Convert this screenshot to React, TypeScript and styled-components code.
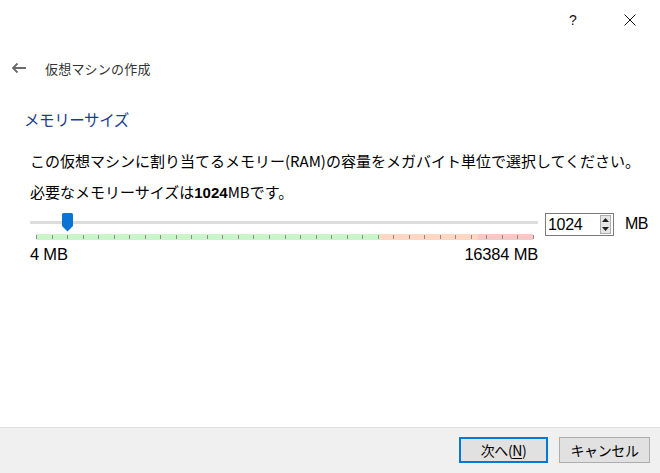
import React from "react";
import styled, { createGlobalStyle } from "styled-components";

const GlobalStyle = createGlobalStyle`
  html, body {
    margin: 0;
    padding: 0;
    background: #fff;
  }
  body {
    font-family: "Noto Sans CJK JP", "Liberation Sans", sans-serif;
    color: #000;
  }
`;

const TOTAL = 16384;
const VALUE = 1024;
const TRACK_W = 508;
const STRIP_LEFT = 6;
const STRIP_W = 497;

const App = () => {
  const ticks = Array.from({ length: 33 }, (_, i) => i * (STRIP_W / 32));
  const handleX = STRIP_LEFT + (VALUE / TOTAL) * STRIP_W;

  return (
    <Window>
      <GlobalStyle />
      <TitleBar>
        <TitleButton>?</TitleButton>
        <TitleButton>
          <svg width="12" height="12" viewBox="0 0 12 12">
            <path d="M0.5 0.5 L11.5 11.5 M11.5 0.5 L0.5 11.5" stroke="#111" strokeWidth="1" fill="none" />
          </svg>
        </TitleButton>
      </TitleBar>

      <Header>
        <BackArrow>
          <svg width="15" height="12" viewBox="0 0 15 12">
            <path d="M2 6 H15 M6.5 1.5 L2 6 L6.5 10.5" stroke="#6b6b6b" strokeWidth="1.8" fill="none" />
          </svg>
        </BackArrow>
        <HeaderTitle>仮想マシンの作成</HeaderTitle>
      </Header>

      <SectionTitle>メモリーサイズ</SectionTitle>

      <Body>
        <Line>この仮想マシンに割り当てるメモリー(RAM)の容量をメガバイト単位で選択してください。</Line>
        <Line>
          必要なメモリーサイズは<Bold>1024</Bold>MBです。
        </Line>
      </Body>

      <SliderRow>
        <Track>
          <Groove />
          <Strip>
            <Zone $color="#c9f6c9" $width={344} />
            <Zone $color="#ffd7c2" $width={98} />
            <Zone $color="#ffc6c6" $width={55} />
            {ticks.map((x, i) => (
              <Tick key={i} style={{ left: x }} />
            ))}
          </Strip>
          <Handle style={{ left: handleX - 5.5 }}>
            <svg width="11" height="19" viewBox="0 0 11 19">
              <path d="M0 1.5 Q0 0 1.5 0 H9.5 Q11 0 11 1.5 V13 L5.5 18.5 L0 13 Z" fill="#0b73d1" />
            </svg>
          </Handle>
        </Track>
        <SpinBox>
          <SpinValue>1024</SpinValue>
          <SpinButtons>
            <SpinArrow>
              <svg width="7" height="4" viewBox="0 0 7 4">
                <path d="M0 4 L3.5 0 L7 4 Z" fill="#222" />
              </svg>
            </SpinArrow>
            <SpinArrow>
              <svg width="7" height="4" viewBox="0 0 7 4">
                <path d="M0 0 L3.5 4 L7 0 Z" fill="#222" />
              </svg>
            </SpinArrow>
          </SpinButtons>
        </SpinBox>
        <Unit>MB</Unit>
      </SliderRow>

      <Labels>
        <span>4 MB</span>
        <span>16384 MB</span>
      </Labels>

      <Footer>
        <Button $primary>
          次へ(<u>N</u>)
        </Button>
        <Button>キャンセル</Button>
      </Footer>
    </Window>
  );
};

export default App;

const Window = styled.div`
  width: 660px;
  height: 473px;
  display: flex;
  flex-direction: column;
  overflow: hidden;
`;

const TitleBar = styled.div`
  height: 40px;
  display: flex;
  justify-content: flex-end;
  gap: 11px;
  padding-right: 7px;
`;

const TitleButton = styled.div`
  width: 46px;
  height: 40px;
  display: flex;
  align-items: center;
  justify-content: center;
  font-family: "Liberation Sans", sans-serif;
  font-size: 14px;
  color: #111;
`;

const Header = styled.div`
  height: 24px;
  margin-top: 16px;
  display: flex;
  align-items: center;
  padding-left: 11px;
`;

const BackArrow = styled.div`
  width: 34px;
  display: flex;
  align-items: center;
`;

const HeaderTitle = styled.div`
  font-size: 13px;
  color: #333;
  letter-spacing: 0.2px;
`;

const SectionTitle = styled.div`
  margin-top: 27px;
  height: 24px;
  line-height: 24px;
  padding-left: 24px;
  font-size: 15.5px;
  color: #1a3d8f;
  letter-spacing: -0.4px;
`;

const Body = styled.div`
  margin-top: 14px;
  padding-left: 30px;
`;

const Line = styled.div`
  height: 31px;
  line-height: 31px;
  font-size: 15px;
  letter-spacing: 0;
  white-space: nowrap;
`;

const Bold = styled.b`
  font-family: "Liberation Sans", sans-serif;
  font-weight: 700;
`;

const SliderRow = styled.div`
  margin-top: 4px;
  padding-left: 30px;
  display: flex;
  align-items: flex-start;
`;

const Track = styled.div`
  position: relative;
  width: ${TRACK_W}px;
  height: 28px;
`;

const Groove = styled.div`
  margin-top: 10px;
  height: 3px;
  background: #dcdcdc;
  border-radius: 1px;
`;

const Strip = styled.div`
  position: relative;
  margin-top: 10px;
  margin-left: ${STRIP_LEFT}px;
  width: ${STRIP_W}px;
  height: 6px;
  display: flex;
`;

const Zone = styled.div<{ $color: string; $width: number }>`
  width: ${(p) => p.$width}px;
  height: 100%;
  background: ${(p) => p.$color};
`;

const Tick = styled.div`
  position: absolute;
  top: 1px;
  width: 1px;
  height: 4px;
  background: #8c8c8c;
`;

const Handle = styled.div`
  position: absolute;
  top: 2px;
  width: 11px;
  height: 19px;
  display: flex;
`;

const SpinBox = styled.div`
  margin-top: 2px;
  margin-left: 7px;
  width: 69px;
  height: 23px;
  box-sizing: border-box;
  border: 1px solid #7a7a7a;
  display: flex;
  align-items: center;
  justify-content: space-between;
  padding: 1px 2px 1px 2px;
  background: #fff;
`;

const SpinValue = styled.span`
  font-family: "Liberation Sans", sans-serif;
  font-size: 16px;
  letter-spacing: -0.3px;
`;

const SpinButtons = styled.div`
  width: 11px;
  height: 19px;
  display: flex;
  flex-direction: column;
  border: 1px solid #adadad;
  background: #e5e5e5;
  box-sizing: border-box;
`;

const SpinArrow = styled.div`
  flex: 1;
  display: flex;
  align-items: center;
  justify-content: center;
`;

const Unit = styled.span`
  margin-left: 11px;
  margin-top: 4px;
  font-family: "Liberation Sans", sans-serif;
  font-size: 16px;
  letter-spacing: -0.5px;
`;

const Labels = styled.div`
  margin-top: 6px;
  width: ${TRACK_W}px;
  padding-left: 30px;
  display: flex;
  justify-content: space-between;
  font-family: "Liberation Sans", sans-serif;
  font-size: 16.5px;
  letter-spacing: -0.2px;
  line-height: 18px;
`;

const Footer = styled.div`
  margin-top: auto;
  height: 46px;
  box-sizing: border-box;
  border-top: 1px solid #dfdfdf;
  background: #f0f0f0;
  display: flex;
  justify-content: flex-end;
  align-items: flex-start;
  gap: 11px;
  padding: 9px 10px 0 0;
`;

const Button = styled.div<{ $primary?: boolean }>`
  height: 26px;
  width: ${(p) => (p.$primary ? 89 : 91)}px;
  box-sizing: border-box;
  border: ${(p) => (p.$primary ? "2px solid #0078d7" : "1px solid #adadad")};
  background: #e1e1e1;
  display: flex;
  align-items: center;
  justify-content: center;
  font-size: 14px;
  letter-spacing: -0.4px;
  color: #000;

  u {
    text-underline-offset: 2px;
  }
`;
